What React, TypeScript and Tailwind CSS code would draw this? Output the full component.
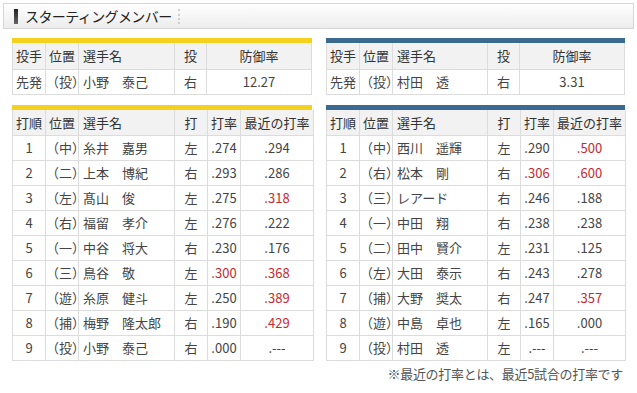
import React from "react"

type Pitcher = { pos: string; name: string; hand: string; era: string }
type Batter = { order: string; pos: string; name: string; hand: string; avg: string; avgHot?: boolean; recent: string; recentHot?: boolean }

const FONT = { fontFamily: '"Noto Sans CJK JP", "Noto Sans", sans-serif' }

const leftPitcher: Pitcher = { pos: "（投）", name: "小野　泰己", hand: "右", era: "12.27" }
const rightPitcher: Pitcher = { pos: "（投）", name: "村田　透", hand: "右", era: "3.31" }

const leftBatters: Batter[] = [
  { order: "1", pos: "（中）", name: "糸井　嘉男", hand: "左", avg: ".274", recent: ".294" },
  { order: "2", pos: "（二）", name: "上本　博紀", hand: "右", avg: ".293", recent: ".286" },
  { order: "3", pos: "（左）", name: "髙山　俊", hand: "左", avg: ".275", recent: ".318", recentHot: true },
  { order: "4", pos: "（右）", name: "福留　孝介", hand: "左", avg: ".276", recent: ".222" },
  { order: "5", pos: "（一）", name: "中谷　将大", hand: "右", avg: ".230", recent: ".176" },
  { order: "6", pos: "（三）", name: "鳥谷　敬", hand: "左", avg: ".300", avgHot: true, recent: ".368", recentHot: true },
  { order: "7", pos: "（遊）", name: "糸原　健斗", hand: "左", avg: ".250", recent: ".389", recentHot: true },
  { order: "8", pos: "（捕）", name: "梅野　隆太郎", hand: "右", avg: ".190", recent: ".429", recentHot: true },
  { order: "9", pos: "（投）", name: "小野　泰己", hand: "右", avg: ".000", recent: ".---" },
]

const rightBatters: Batter[] = [
  { order: "1", pos: "（中）", name: "西川　遥輝", hand: "左", avg: ".290", recent: ".500", recentHot: true },
  { order: "2", pos: "（右）", name: "松本　剛", hand: "右", avg: ".306", avgHot: true, recent: ".600", recentHot: true },
  { order: "3", pos: "（三）", name: "レアード", hand: "右", avg: ".246", recent: ".188" },
  { order: "4", pos: "（一）", name: "中田　翔", hand: "右", avg: ".238", recent: ".238" },
  { order: "5", pos: "（二）", name: "田中　賢介", hand: "左", avg: ".231", recent: ".125" },
  { order: "6", pos: "（左）", name: "大田　泰示", hand: "右", avg: ".243", recent: ".278" },
  { order: "7", pos: "（捕）", name: "大野　奨太", hand: "右", avg: ".247", recent: ".357", recentHot: true },
  { order: "8", pos: "（遊）", name: "中島　卓也", hand: "左", avg: ".165", recent: ".000" },
  { order: "9", pos: "（投）", name: "村田　透", hand: "左", avg: ".---", recent: ".---" },
]

const TH = "border border-[#dcdcdc] bg-[#f2f2f2] font-normal text-[#333] px-0"
const TD = "border border-[#dcdcdc] text-[#444] px-0"

function PitcherTable({ p, bar, nameW }: { p: Pitcher; bar: string; nameW: number }) {
  return (
    <div>
      <div className={`h-[5px] ${bar}`} />
      <table className="w-full table-fixed border-collapse text-[13px]">
        <colgroup>
          <col className="w-[33px]" />
          <col className="w-[33px]" />
          <col style={{ width: nameW }} />
          <col className="w-[32px]" />
          <col />
        </colgroup>
        <thead>
          <tr className="h-[26px]">
            <th className={`${TH} text-left pl-[3px] border-t-0`}>投手</th>
            <th className={`${TH} text-center border-t-0`}>位置</th>
            <th className={`${TH} text-left pl-[4px] border-t-0`}>選手名</th>
            <th className={`${TH} text-center border-t-0`}>投</th>
            <th className={`${TH} text-center border-t-0`}>防御率</th>
          </tr>
        </thead>
        <tbody>
          <tr className="h-[25px]">
            <td className={`${TD} text-left pl-[3px]`}>先発</td>
            <td className={`${TD} text-center`}>{p.pos}</td>
            <td className={`${TD} text-left pl-[4px] text-[#1b6888]`}>{p.name}</td>
            <td className={`${TD} text-center`}>{p.hand}</td>
            <td className={`${TD} text-center`}>{p.era}</td>
          </tr>
        </tbody>
      </table>
    </div>
  )
}

function BattingTable({ rows, bar, nameW, recentW }: { rows: Batter[]; bar: string; nameW: number; recentW: number }) {
  return (
    <div>
      <div className={`h-[5px] ${bar}`} />
      <table className="w-full table-fixed border-collapse text-[13px]">
        <colgroup>
          <col className="w-[33px]" />
          <col className="w-[33px]" />
          <col style={{ width: nameW }} />
          <col className="w-[33px]" />
          <col className="w-[33px]" />
          <col style={{ width: recentW }} />
        </colgroup>
        <thead>
          <tr className="h-[26px]">
            <th className={`${TH} text-center border-t-0`}>打順</th>
            <th className={`${TH} text-center border-t-0`}>位置</th>
            <th className={`${TH} text-left pl-[4px] border-t-0`}>選手名</th>
            <th className={`${TH} text-center border-t-0`}>打</th>
            <th className={`${TH} text-center border-t-0`}>打率</th>
            <th className={`${TH} text-center border-t-0 whitespace-nowrap`}>最近の打率</th>
          </tr>
        </thead>
        <tbody>
          {rows.map((b) => (
            <tr key={b.order} className="h-[25px]">
              <td className={`${TD} text-center`}>{b.order}</td>
              <td className={`${TD} text-center`}>{b.pos}</td>
              <td className={`${TD} text-left pl-[4px] text-[#1b6888] whitespace-nowrap`}>{b.name}</td>
              <td className={`${TD} text-center`}>{b.hand}</td>
              <td className={`${TD} text-center ${b.avgHot ? "text-[#c8282e]" : ""}`}>{b.avg}</td>
              <td className={`${TD} text-center ${b.recentHot ? "text-[#c8282e]" : ""}`}>{b.recent}</td>
            </tr>
          ))}
        </tbody>
      </table>
    </div>
  )
}

export default function App() {
  return (
    <div className="w-[637px] h-[393px] bg-white overflow-hidden" style={FONT}>
      {/* Title bar */}
      <div className="mx-[3px] mt-[3px] h-[26px] border border-[#d6d6d6] bg-gradient-to-b from-white to-[#ececec] flex items-center">
        <div className="ml-[10px] w-[4px] h-[15px] bg-gradient-to-b from-[#222] to-[#666]" />
        <span className="ml-[7px] text-[14px] text-[#222] tracking-[-0.6px] leading-none">スターティングメンバー</span>
        <div className="ml-[6px] h-[15px] border-l-2 border-dotted border-[#cfcfcf]" />
      </div>

      <div className="flex gap-[14px] pl-[12px] mt-[9px]">
        <div className="w-[300px] flex flex-col gap-[10px]">
          <PitcherTable p={leftPitcher} bar="bg-[#f3d11d]" nameW={96} />
          <BattingTable rows={leftBatters} bar="bg-[#f3d11d]" nameW={96} recentW={73} />
        </div>
        <div className="w-[299px] flex flex-col gap-[10px]">
          <PitcherTable p={rightPitcher} bar="bg-[#3b6a90]" nameW={95} />
          <BattingTable rows={rightBatters} bar="bg-[#3b6a90]" nameW={95} recentW={72} />
        </div>
      </div>

      <div className="w-[623px] mt-[3px] text-right text-[13px] text-[#555] tracking-[-0.3px]">
        ※最近の打率とは、最近5試合の打率です
      </div>
    </div>
  )
}
